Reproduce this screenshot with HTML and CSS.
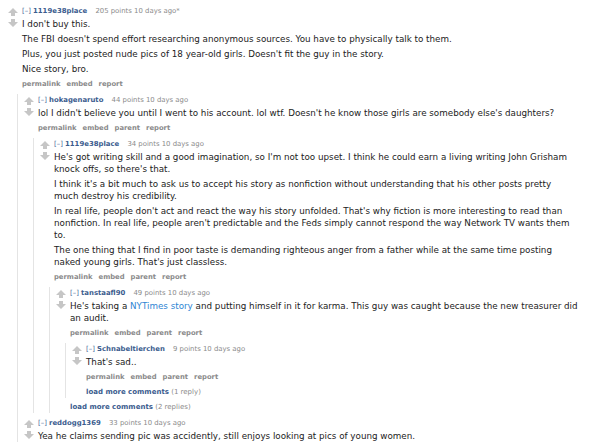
FILE: index.html
```html
<!DOCTYPE html>
<html>
<head>
<meta charset="utf-8">
<link rel="stylesheet" href="styles.css">
</head>
<body>
<div class="thread">
  <div class="comment">
    <div class="main">
      <div class="midcol">
        <svg class="arrow" viewBox="0 0 10 8"><polygon points="5,0 10,5 7,5 7,8 3,8 3,5 0,5"/></svg>
        <svg class="arrow" viewBox="0 0 10 8"><polygon points="3,0 7,0 7,3 10,3 5,8 0,3 3,3"/></svg>
      </div>
      <div class="entry">
        <p class="tagline"><a class="expand">[–]</a> <a class="author">1119e38place</a> <span class="meta">205 points 10 days ago*</span></p>
        <div class="md">
          <p>I don't buy this.</p>
          <p>The FBI doesn't spend effort researching anonymous sources. You have to physically talk to them.</p>
          <p>Plus, you just posted nude pics of 18 year-old girls. Doesn't fit the guy in the story.</p>
          <p>Nice story, bro.</p>
        </div>
        <ul class="flat-list"><li>permalink</li><li>embed</li><li>report</li></ul>
      </div>
    </div>
    <div class="child">
      <div class="comment">
        <div class="main">
          <div class="midcol">
            <svg class="arrow" viewBox="0 0 10 8"><polygon points="5,0 10,5 7,5 7,8 3,8 3,5 0,5"/></svg>
            <svg class="arrow" viewBox="0 0 10 8"><polygon points="3,0 7,0 7,3 10,3 5,8 0,3 3,3"/></svg>
          </div>
          <div class="entry">
            <p class="tagline"><a class="expand">[–]</a> <a class="author">hokagenaruto</a> <span class="meta">44 points 10 days ago</span></p>
            <div class="md">
              <p>lol I didn't believe you until I went to his account. lol wtf. Doesn't he know those girls are somebody else's daughters?</p>
            </div>
            <ul class="flat-list"><li>permalink</li><li>embed</li><li>parent</li><li>report</li></ul>
          </div>
        </div>
        <div class="child">
          <div class="comment">
            <div class="main">
              <div class="midcol">
                <svg class="arrow" viewBox="0 0 10 8"><polygon points="5,0 10,5 7,5 7,8 3,8 3,5 0,5"/></svg>
                <svg class="arrow" viewBox="0 0 10 8"><polygon points="3,0 7,0 7,3 10,3 5,8 0,3 3,3"/></svg>
              </div>
              <div class="entry">
                <p class="tagline"><a class="expand">[–]</a> <a class="author">1119e38place</a> <span class="meta">34 points 10 days ago</span></p>
                <div class="md">
                  <p>He's got writing skill and a good imagination, so I'm not too upset. I think he could earn a living writing John Grisham knock offs, so there's that.</p>
                  <p>I think it's a bit much to ask us to accept his story as nonfiction without understanding that his other posts pretty much destroy his credibility.</p>
                  <p>In real life, people don't act and react the way his story unfolded. That's why fiction is more interesting to read than nonfiction. In real life, people aren't predictable and the Feds simply cannot respond the way Network TV wants them to.</p>
                  <p>The one thing that I find in poor taste is demanding righteous anger from a father while at the same time posting naked young girls. That's just classless.</p>
                </div>
                <ul class="flat-list"><li>permalink</li><li>embed</li><li>parent</li><li>report</li></ul>
              </div>
            </div>
            <div class="child">
              <div class="comment">
                <div class="main">
                  <div class="midcol">
                    <svg class="arrow" viewBox="0 0 10 8"><polygon points="5,0 10,5 7,5 7,8 3,8 3,5 0,5"/></svg>
                    <svg class="arrow" viewBox="0 0 10 8"><polygon points="3,0 7,0 7,3 10,3 5,8 0,3 3,3"/></svg>
                  </div>
                  <div class="entry">
                    <p class="tagline"><a class="expand">[–]</a> <a class="author">tanstaafl90</a> <span class="meta">49 points 10 days ago</span></p>
                    <div class="md">
                      <p>He's taking a <a class="link">NYTimes story</a> and putting himself in it for karma. This guy was caught because the new treasurer did an audit.</p>
                    </div>
                    <ul class="flat-list"><li>permalink</li><li>embed</li><li>parent</li><li>report</li></ul>
                  </div>
                </div>
                <div class="child">
                  <div class="comment">
                    <div class="main">
                      <div class="midcol">
                        <svg class="arrow" viewBox="0 0 10 8"><polygon points="5,0 10,5 7,5 7,8 3,8 3,5 0,5"/></svg>
                        <svg class="arrow" viewBox="0 0 10 8"><polygon points="3,0 7,0 7,3 10,3 5,8 0,3 3,3"/></svg>
                      </div>
                      <div class="entry">
                        <p class="tagline"><a class="expand">[–]</a> <a class="author">Schnabeltierchen</a> <span class="meta">9 points 10 days ago</span></p>
                        <div class="md">
                          <p>That's sad..</p>
                        </div>
                        <ul class="flat-list"><li>permalink</li><li>embed</li><li>parent</li><li>report</li></ul>
                      </div>
                    </div>
                  </div>
                  <p class="more"><a>load more comments</a> <span class="meta">(1 reply)</span></p>
                </div>
              </div>
              <p class="more"><a>load more comments</a> <span class="meta">(2 replies)</span></p>
            </div>
          </div>
        </div>
      </div>
      <div class="comment">
        <div class="main">
          <div class="midcol">
            <svg class="arrow" viewBox="0 0 10 8"><polygon points="5,0 10,5 7,5 7,8 3,8 3,5 0,5"/></svg>
            <svg class="arrow" viewBox="0 0 10 8"><polygon points="3,0 7,0 7,3 10,3 5,8 0,3 3,3"/></svg>
          </div>
          <div class="entry">
            <p class="tagline"><a class="expand">[–]</a> <a class="author">reddogg1369</a> <span class="meta">33 points 10 days ago</span></p>
            <div class="md">
              <p>Yea he claims sending pic was accidently, still enjoys looking at pics of young women.</p>
            </div>
          </div>
        </div>
      </div>
    </div>
  </div>
</div>
</body>
</html>
```

FILE: styles.css
```css
html, body {
  margin: 0;
  padding: 0;
  background: #ffffff;
}

body {
  font-family: "DejaVu Sans", Verdana, sans-serif;
  color: #222222;
  overflow: hidden;
}

.thread {
  padding: 1px 8px 0 8px;
}

.comment {
  margin-top: 4px;
}

.main {
  display: flex;
}

.midcol {
  width: 14px;
  flex: none;
  display: flex;
  flex-direction: column;
  gap: 3px;
  padding-top: 3px;
}

.arrow {
  width: 10px;
  height: 8px;
  fill: #c6c6c6;
  display: block;
}

.entry {
  flex: 1;
  min-width: 0;
}

.tagline {
  margin: 0;
  font-size: 6.9px;
  line-height: 12px;
  height: 12px;
  white-space: nowrap;
}

.expand {
  color: #4a6b9b;
}

.author {
  color: #3b5c8e;
  font-weight: bold;
  margin-right: 6px;
}

.meta {
  color: #8a8a8a;
}

.md {
  max-width: 518px;
  font-size: 8.75px;
  line-height: 12px;
}

.md p {
  margin: 3px 0 0;
}

.md p:first-child {
  margin-top: 1px;
}

.link {
  color: #2f86d4;
}

.flat-list {
  list-style: none;
  margin: 3px 0 0;
  padding: 0;
  display: flex;
  gap: 6px;
  font-size: 6.8px;
  line-height: 12px;
  font-weight: bold;
  color: #8a8a8a;
}

.child {
  margin-left: 9px;
  border-left: 1px solid #e4e4e4;
  padding-left: 6px;
}

.more {
  margin: 3px 0 0;
  padding-left: 14px;
  font-size: 7px;
  line-height: 12px;
}

.more a {
  color: #3b5c8e;
  font-weight: bold;
}
```
